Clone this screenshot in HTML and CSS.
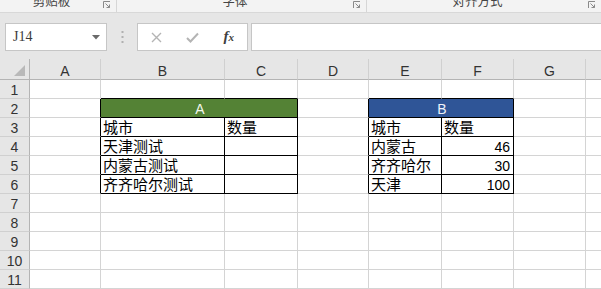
FILE: index.html
```html
<!DOCTYPE html>
<html lang="zh-CN">
<head>
<meta charset="utf-8">
<title>Excel</title>
<link rel="stylesheet" href="styles.css">
</head>
<body>
<div class="app">
  <div class="ribbon">
    <div class="grp g1">
      <span class="glabel">剪贴板</span>
      <svg class="launch" width="8" height="8" viewBox="0 0 8 8"><path d="M0.5 7V0.5H7" fill="none" stroke="#8a8a8a" stroke-width="1"/><path d="M2.5 2.5L6.5 6.5M6.5 3.5V6.5H3.5" fill="none" stroke="#8a8a8a" stroke-width="1"/></svg>
    </div>
    <div class="grp g2">
      <span class="glabel">字体</span>
      <svg class="launch" width="8" height="8" viewBox="0 0 8 8"><path d="M0.5 7V0.5H7" fill="none" stroke="#8a8a8a" stroke-width="1"/><path d="M2.5 2.5L6.5 6.5M6.5 3.5V6.5H3.5" fill="none" stroke="#8a8a8a" stroke-width="1"/></svg>
    </div>
    <div class="grp g3">
      <span class="glabel">对齐方式</span>
      <svg class="launch" width="8" height="8" viewBox="0 0 8 8"><path d="M0.5 7V0.5H7" fill="none" stroke="#8a8a8a" stroke-width="1"/><path d="M2.5 2.5L6.5 6.5M6.5 3.5V6.5H3.5" fill="none" stroke="#8a8a8a" stroke-width="1"/></svg>
    </div>
  </div>

  <div class="fbar">
    <div class="namebox">
      <span class="nb-text">J14</span>
      <svg width="8" height="5" viewBox="0 0 8 5"><path d="M0 0H8L4 4.5Z" fill="#6a6a6a"/></svg>
    </div>
    <div class="dots">
      <svg width="3" height="13" viewBox="0 0 3 13"><rect x="0.5" y="0" width="2" height="2" fill="#b0b0b0"/><rect x="0.5" y="5" width="2" height="2" fill="#b0b0b0"/><rect x="0.5" y="10" width="2" height="2" fill="#b0b0b0"/></svg>
    </div>
    <div class="fxbox">
      <div class="fxslot">
        <svg width="11" height="11" viewBox="0 0 11 11"><path d="M1 1L10 10M10 1L1 10" stroke="#b4b4b4" stroke-width="1.4" fill="none"/></svg>
      </div>
      <div class="fxslot">
        <svg width="13" height="11" viewBox="0 0 13 11"><path d="M1 6L4.5 9.5L12 1.5" stroke="#b4b4b4" stroke-width="2" fill="none"/></svg>
      </div>
      <div class="fxslot fx"><span class="fx-f">f</span><span class="fx-x">x</span></div>
    </div>
    <div class="finput"></div>
  </div>

  <div class="sheet">
    <!-- header row -->
    <div class="corner"><svg width="11" height="11" viewBox="0 0 11 11"><path d="M11 0V11H0Z" fill="#b9b9b9"/></svg></div>
    <div class="ch">A</div><div class="ch">B</div><div class="ch">C</div><div class="ch">D</div><div class="ch">E</div><div class="ch">F</div><div class="ch">G</div><div class="ch"></div>

    <!-- row 1 -->
    <div class="rh">1</div>
    <div class="c"></div><div class="c tb"></div><div class="c tb"></div><div class="c"></div><div class="c tb"></div><div class="c tb"></div><div class="c"></div><div class="c"></div>

    <!-- row 2 -->
    <div class="rh">2</div>
    <div class="c lb"></div>
    <div class="c bx span2 green">A</div>
    <div class="c lb"></div>
    <div class="c bx span2 blue">B</div>
    <div class="c"></div><div class="c"></div>

    <!-- row 3 -->
    <div class="rh">3</div>
    <div class="c lb"></div>
    <div class="c bx">城市</div><div class="c bx">数量</div>
    <div class="c lb"></div>
    <div class="c bx">城市</div><div class="c bx">数量</div>
    <div class="c"></div><div class="c"></div>

    <!-- row 4 -->
    <div class="rh">4</div>
    <div class="c lb"></div>
    <div class="c bx">天津测试</div><div class="c bx"></div>
    <div class="c lb"></div>
    <div class="c bx">内蒙古</div><div class="c bx num">46</div>
    <div class="c"></div><div class="c"></div>

    <!-- row 5 -->
    <div class="rh">5</div>
    <div class="c lb"></div>
    <div class="c bx">内蒙古测试</div><div class="c bx"></div>
    <div class="c lb"></div>
    <div class="c bx">齐齐哈尔</div><div class="c bx num">30</div>
    <div class="c"></div><div class="c"></div>

    <!-- row 6 -->
    <div class="rh">6</div>
    <div class="c lb"></div>
    <div class="c bx">齐齐哈尔测试</div><div class="c bx"></div>
    <div class="c lb"></div>
    <div class="c bx">天津</div><div class="c bx num">100</div>
    <div class="c"></div><div class="c"></div>

    <div class="rh">7</div>
    <div class="c"></div><div class="c"></div><div class="c"></div><div class="c"></div><div class="c"></div><div class="c"></div><div class="c"></div><div class="c"></div>
    <div class="rh">8</div>
    <div class="c"></div><div class="c"></div><div class="c"></div><div class="c"></div><div class="c"></div><div class="c"></div><div class="c"></div><div class="c"></div>
    <div class="rh">9</div>
    <div class="c"></div><div class="c"></div><div class="c"></div><div class="c"></div><div class="c"></div><div class="c"></div><div class="c"></div><div class="c"></div>
    <div class="rh">10</div>
    <div class="c"></div><div class="c"></div><div class="c"></div><div class="c"></div><div class="c"></div><div class="c"></div><div class="c"></div><div class="c"></div>
    <div class="rh">11</div>
    <div class="c"></div><div class="c"></div><div class="c"></div><div class="c"></div><div class="c"></div><div class="c"></div><div class="c"></div><div class="c"></div>
  </div>
</div>
</body>
</html>
```

FILE: styles.css
```css
* { box-sizing: border-box; }

html, body {
  margin: 0;
  padding: 0;
  background: #ffffff;
}

body {
  width: 601px;
  height: 289px;
  overflow: hidden;
  font-family: "Liberation Sans", "Noto Sans CJK SC", sans-serif;
}

.app {
  display: flex;
  flex-direction: column;
  width: 601px;
  height: 289px;
  overflow: hidden;
}

/* ribbon bottom strip */
.ribbon {
  display: flex;
  height: 13px;
  flex: none;
  background: #f3f3f3;
  border-bottom: 1px solid #d8d8d8;
  overflow: hidden;
}

.grp {
  display: flex;
  align-items: flex-start;
  height: 12px;
}

.g1 { width: 117px; border-right: 1px solid #d6d6d6; }
.g2 { width: 250px; border-right: 1px solid #d6d6d6; }
.g3 { flex: 1; }

.glabel {
  flex: 1;
  text-align: center;
  font-family: "Noto Sans CJK SC", sans-serif;
  font-size: 12.5px;
  line-height: 12px;
  color: #454545;
  margin-top: -5px;
}

.launch {
  flex: none;
  margin: 1px 5px 0 0;
}

/* formula bar */
.fbar {
  display: flex;
  align-items: flex-start;
  flex: none;
  height: 46px;
  padding: 10px 0 0 5px;
  background: #e6e6e6;
}

.namebox {
  width: 102px;
  height: 28px;
  background: #ffffff;
  border: 1px solid #c6c6c6;
  display: flex;
  align-items: center;
  justify-content: space-between;
  padding: 0 6px 0 7px;
}

.nb-text {
  font-family: "Liberation Serif", serif;
  font-size: 14px;
  color: #3a3a3a;
}

.dots {
  width: 30px;
  height: 28px;
  display: flex;
  align-items: center;
  justify-content: center;
}

.fxbox {
  width: 111px;
  height: 28px;
  background: #ffffff;
  border: 1px solid #c6c6c6;
  display: flex;
}

.fxslot {
  width: 37px;
  height: 26px;
  display: flex;
  align-items: center;
  justify-content: center;
}

.fx {
  font-family: "Liberation Serif", serif;
  font-style: italic;
  color: #404040;
  align-items: baseline;
  padding-top: 4px;
}

.fx-f { font-size: 15px; font-weight: bold; }
.fx-x { font-size: 11px; font-weight: bold; }

.finput {
  flex: 1;
  margin-left: 3px;
  height: 28px;
  background: #ffffff;
  border: 1px solid #c6c6c6;
  border-right: none;
}

/* spreadsheet grid */
.sheet {
  display: grid;
  grid-template-columns: 30px 71px 124px 73px 71px 73px 72px 72px 72px;
  grid-template-rows: 21px repeat(11, 19px);
  flex: none;
  background: #ffffff;
}

.corner {
  background: #e6e6e6;
  border-right: 1px solid #b4b4b4;
  border-bottom: 1px solid #b4b4b4;
  display: flex;
  align-items: flex-end;
  justify-content: flex-end;
  padding: 0 4px 3px 0;
}

.ch {
  background: #e6e6e6;
  border-right: 1px solid #d0d0d0;
  border-bottom: 1px solid #b4b4b4;
  font-size: 14px;
  line-height: 16px;
  color: #333333;
  text-align: center;
  padding-top: 4px;
}

.rh {
  background: #e6e6e6;
  border-right: 1px solid #b4b4b4;
  border-bottom: 1px solid #d0d0d0;
  font-size: 14px;
  line-height: 16px;
  color: #333333;
  text-align: center;
  padding-top: 2px;
}

.c {
  border-right: 1px solid #d4d4d4;
  border-bottom: 1px solid #d4d4d4;
  font-family: "Noto Sans CJK SC", sans-serif;
  font-size: 15px;
  line-height: 18px;
  color: #000000;
  padding-left: 2px;
  white-space: nowrap;
  overflow: hidden;
}

.tb { border-bottom-color: #000000; }
.lb { border-right-color: #000000; }
.bx {
  border-right-color: #000000;
  border-bottom-color: #000000;
}

.span2 { grid-column: span 2; }

.green {
  background: #548235;
  color: #f2f7ee;
  text-align: center;
  font-family: "Liberation Sans", sans-serif;
  font-size: 14px;
  padding-top: 1px;
}

.blue {
  background: #2f5597;
  color: #eef2fa;
  text-align: center;
  font-family: "Liberation Sans", sans-serif;
  font-size: 14px;
  padding-top: 1px;
}

.num {
  font-family: "Liberation Sans", sans-serif;
  font-size: 14px;
  text-align: right;
  padding: 1px 3px 0 0;
}
```
